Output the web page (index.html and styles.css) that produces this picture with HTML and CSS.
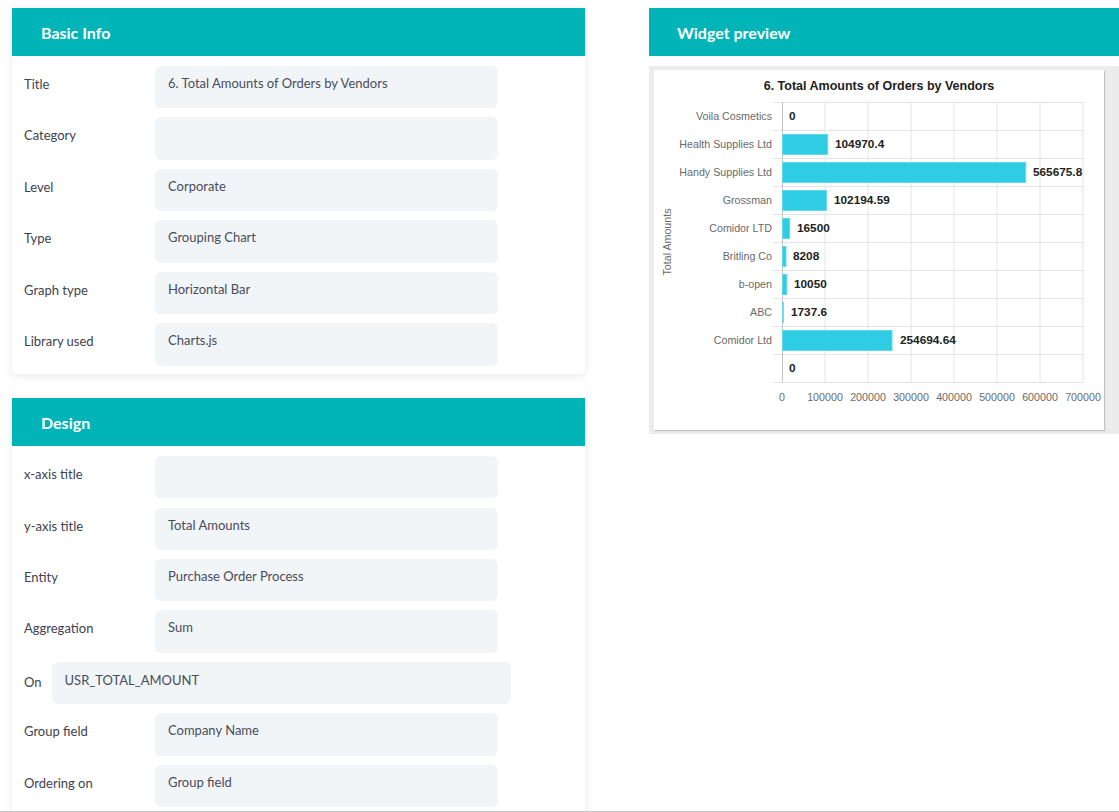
FILE: index.html
```html
<!DOCTYPE html>
<html lang="en">
<head>
<meta charset="utf-8">
<title>Widget settings</title>
<link rel="stylesheet" href="styles.css">
</head>
<body>
<main class="page">
  <div class="column-left">
    <section class="card">
      <header class="card-head">Basic Info</header>
      <div class="card-body">
        <div class="field"><span class="field-label">Title</span><div class="field-value">6. Total Amounts of Orders by Vendors</div></div>
        <div class="field"><span class="field-label">Category</span><div class="field-value"></div></div>
        <div class="field"><span class="field-label">Level</span><div class="field-value">Corporate</div></div>
        <div class="field"><span class="field-label">Type</span><div class="field-value">Grouping Chart</div></div>
        <div class="field"><span class="field-label">Graph type</span><div class="field-value">Horizontal Bar</div></div>
        <div class="field"><span class="field-label">Library used</span><div class="field-value">Charts.js</div></div>
      </div>
    </section>
    <section class="card">
      <header class="card-head">Design</header>
      <div class="card-body">
        <div class="field"><span class="field-label">x-axis title</span><div class="field-value"></div></div>
        <div class="field"><span class="field-label">y-axis title</span><div class="field-value">Total Amounts</div></div>
        <div class="field"><span class="field-label">Entity</span><div class="field-value">Purchase Order Process</div></div>
        <div class="field"><span class="field-label">Aggregation</span><div class="field-value">Sum</div></div>
        <div class="field field-inline"><span class="field-label">On</span><div class="field-value">USR_TOTAL_AMOUNT</div></div>
        <div class="field"><span class="field-label">Group field</span><div class="field-value">Company Name</div></div>
        <div class="field"><span class="field-label">Ordering on</span><div class="field-value">Group field</div></div>
      </div>
    </section>
  </div>

  <section class="preview">
    <header class="card-head">Widget preview</header>
    <div class="preview-frame">
      <div class="preview-canvas">
        <svg class="chart" width="450" height="360" viewBox="0 0 450 360" xmlns="http://www.w3.org/2000/svg">
          <text class="chart-title" x="225" y="20" text-anchor="middle">6. Total Amounts of Orders by Vendors</text>
          <g class="grid">
            <line x1="171" y1="32" x2="171" y2="312"/>
            <line x1="214" y1="32" x2="214" y2="312"/>
            <line x1="257" y1="32" x2="257" y2="312"/>
            <line x1="300" y1="32" x2="300" y2="312"/>
            <line x1="343" y1="32" x2="343" y2="312"/>
            <line x1="386" y1="32" x2="386" y2="312"/>
            <line x1="429" y1="32" x2="429" y2="312"/>
            <line x1="119" y1="32.5" x2="429" y2="32.5"/>
            <line x1="119" y1="60.5" x2="429" y2="60.5"/>
            <line x1="119" y1="88.5" x2="429" y2="88.5"/>
            <line x1="119" y1="116.5" x2="429" y2="116.5"/>
            <line x1="119" y1="144.5" x2="429" y2="144.5"/>
            <line x1="119" y1="172.5" x2="429" y2="172.5"/>
            <line x1="119" y1="200.5" x2="429" y2="200.5"/>
            <line x1="119" y1="228.5" x2="429" y2="228.5"/>
            <line x1="119" y1="256.5" x2="429" y2="256.5"/>
            <line x1="119" y1="284.5" x2="429" y2="284.5"/>
            <line x1="119" y1="312.5" x2="429" y2="312.5"/>
          </g>
          <line class="zero-line" x1="128.5" y1="32" x2="128.5" y2="312"/>
          <g class="bars">
            <rect x="128.5" y="64.5" width="45.1" height="20"/>
            <rect x="128.5" y="92.5" width="243.2" height="20"/>
            <rect x="128.5" y="120.5" width="43.9" height="20"/>
            <rect x="128.5" y="148.5" width="7.1" height="20"/>
            <rect x="128.5" y="176.5" width="3.5" height="20"/>
            <rect x="128.5" y="204.5" width="4.3" height="20"/>
            <rect x="128.5" y="232.5" width="0.8" height="20"/>
            <rect x="128.5" y="260.5" width="109.5" height="20"/>
          </g>
          <g class="cat-labels" text-anchor="end">
            <text x="118" y="50">Voila Cosmetics</text>
            <text x="118" y="78">Health Supplies Ltd</text>
            <text x="118" y="106">Handy Supplies Ltd</text>
            <text x="118" y="134">Grossman</text>
            <text x="118" y="162">Comidor LTD</text>
            <text x="118" y="190">Britling Co</text>
            <text x="118" y="218">b-open</text>
            <text x="118" y="246">ABC</text>
            <text x="118" y="274">Comidor Ltd</text>
          </g>
          <g class="val-labels">
            <text x="135" y="50">0</text>
            <text x="181" y="78">104970.4</text>
            <text x="379" y="106">565675.8</text>
            <text x="180" y="134">102194.59</text>
            <text x="143" y="162">16500</text>
            <text x="139" y="190">8208</text>
            <text x="140" y="218">10050</text>
            <text x="137" y="246">1737.6</text>
            <text x="246" y="274">254694.64</text>
            <text x="135" y="302">0</text>
          </g>
          <g class="tick-labels" text-anchor="middle">
            <text x="128" y="331">0</text>
            <text x="171" y="331">100000</text>
            <text x="214" y="331">200000</text>
            <text x="257" y="331">300000</text>
            <text x="300" y="331">400000</text>
            <text x="343" y="331">500000</text>
            <text x="386" y="331">600000</text>
            <text x="429" y="331">700000</text>
          </g>
          <text class="axis-title" transform="translate(13 172) rotate(-90)" text-anchor="middle">Total Amounts</text>
        </svg>
      </div>
    </div>
  </section>
</main>
<div class="window-edge"></div>
</body>
</html>
```

FILE: styles.css
```css
html, body {
  margin: 0;
  padding: 0;
  background: #ffffff;
}

body {
  font-family: Lato, "Open Sans", "Noto Sans", sans-serif;
  font-size: 13px;
  color: #3d3f4c;
}

.page {
  display: grid;
  grid-template-columns: 573px 470px;
  column-gap: 64px;
  align-items: start;
  padding: 8px 0 0 12px;
}

.column-left {
  display: flex;
  flex-direction: column;
  gap: 24px;
}

.card {
  background: #ffffff;
  border-radius: 0 0 4px 4px;
  box-shadow: 0 2px 9px rgba(40, 50, 70, 0.11);
}

.card-head {
  height: 48px;
  display: flex;
  align-items: center;
  padding-left: 29px;
  background: #00b4b8;
  color: #ffffff;
  font-weight: 700;
  font-size: 16px;
}

.card-body {
  padding: 10px 12px 8.3px;
}

.field {
  display: flex;
  align-items: flex-start;
}

.field + .field {
  margin-top: 9.2px;
}

.field-label {
  flex: none;
  width: 131px;
  padding-top: 10px;
  line-height: 16px;
  color: #40424f;
}

.field-value {
  box-sizing: border-box;
  width: 343px;
  height: 42.3px;
  padding: 9px 13px 0;
  line-height: 16px;
  background: #f1f5f8;
  border-radius: 6px;
  color: #4a4c5a;
}

.field-inline .field-label {
  width: auto;
  padding-top: 12px;
  margin-right: 10px;
}

.field-inline .field-value {
  width: 459px;
  padding-top: 10px;
}

.preview {
  display: flex;
  flex-direction: column;
}

.preview .card-head {
  padding-left: 28px;
}

.preview-frame {
  margin-top: 10px;
  background: #ececec;
  padding: 4px 15px 4px 5px;
}

.preview-canvas {
  background: #ffffff;
  height: 360px;
  box-shadow: 1px 1px 1px rgba(0, 0, 0, 0.18);
}

.chart {
  display: block;
  font-family: "Liberation Sans", Arial, sans-serif;
}

.chart-title {
  font-size: 12.5px;
  font-weight: 700;
  fill: #1e1e1e;
}

.grid line {
  stroke: #e4e4e4;
  stroke-width: 1;
}

.zero-line {
  stroke: #c4c4c4;
  stroke-width: 1;
}

.bars rect {
  fill: #2ecde3;
  stroke: #62d9ea;
  stroke-width: 1;
}

.cat-labels text,
.tick-labels text,
.axis-title {
  font-size: 10.7px;
  fill: #6a6a6a;
}

.axis-title {
  dominant-baseline: central;
}

.val-labels text {
  font-size: 11.8px;
  font-weight: 700;
  fill: #222222;
}

.window-edge {
  position: fixed;
  left: 0;
  right: 0;
  bottom: 0;
  height: 1px;
  background: #c6c6c6;
}
```
